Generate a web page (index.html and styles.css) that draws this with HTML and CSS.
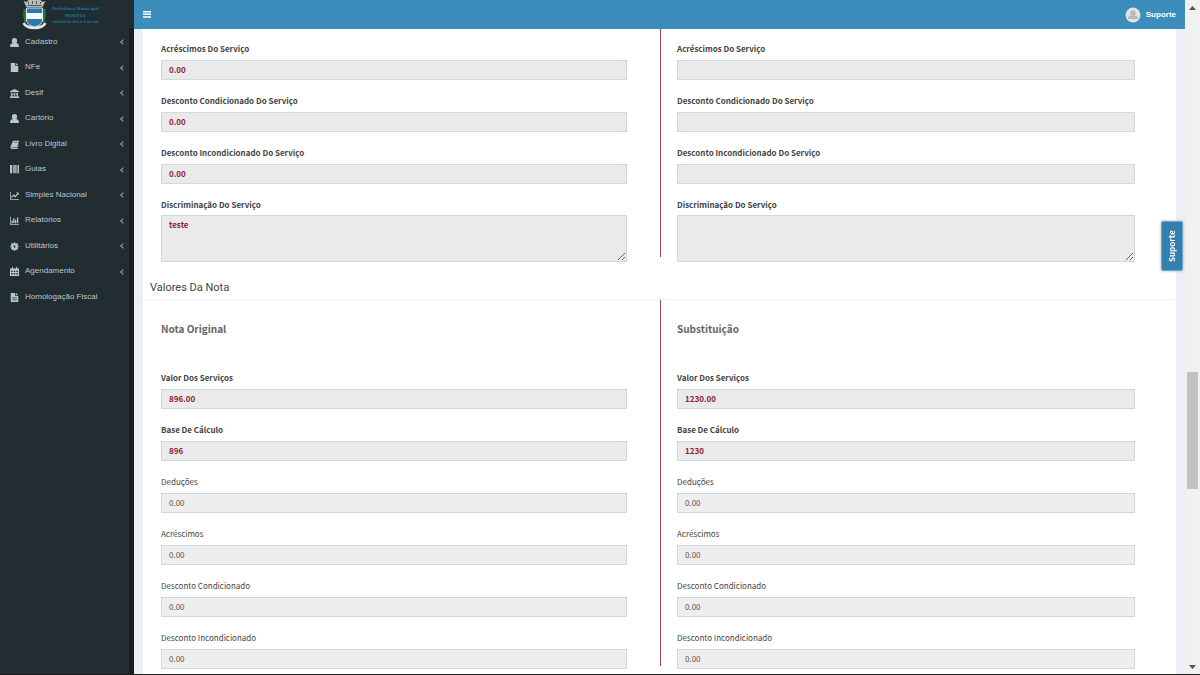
FILE: index.html
```html
<!DOCTYPE html>
<html lang="pt-BR">
<head>
<meta charset="utf-8">
<title>Nota Fiscal - Substituição</title>
<link rel="stylesheet" href="styles.css">
</head>
<body>
<div class="app">
  <aside class="sidebar">
    <a class="brand" href="#">
      <svg class="crest" viewBox="0 0 26 30" aria-hidden="true">
        <path fill="#237a3c" d="M2 9h3v13H3q-2-6-1-13zM21 9h3q1 7-1 13h-2z"/>
        <path fill="#b9bcb9" d="M2 1l3 1 2-2h12l2 2 3-1-3 6H5z"/>
        <path stroke="#4b5355" stroke-width="1" fill="none" d="M7 2v2M11 1v3M15 1v3M19 2v2M6 5.500h14"/>
        <path fill="#2a7ab0" stroke="#dfe5e8" d="M5 8h16v12q0 5-8 7-8-2-8-7z"/>
        <path fill="#f3f6f8" d="M5 13h16v6H5z"/>
        <path fill="none" stroke="#e2e5e4" stroke-width="2.500" d="M2 23q3 5 11 5t11-5"/>
      </svg>
      <span class="brand-text"><b>Prefeitura Municipal</b><b>MODELO</b><small>GESTÃO DE NFS-E E ISS ON</small></span>
    </a>
    <nav class="menu">
      <a href="#"><svg viewBox="0 0 12 12"><path d="M6 0c2.500 0 3.500 1.500 3.500 3.500 0 1.500-.7 2.500-1.300 3C11 7 12 9 12 12H0c0-3 1-5 3.800-5.500-.6-.5-1.300-1.500-1.300-3C2.500 1.500 3.500 0 6 0z"/></svg><span>Cadastro</span><i class="caret"></i></a>
      <a href="#"><svg viewBox="0 0 12 12"><path d="M1 0h6v4h4v8H1zM8 0l3 3H8z"/></svg><span>NFe</span><i class="caret"></i></a>
      <a href="#"><svg viewBox="0 0 12 12"><path d="M6 0l6 3v1H0V3zM1.300 5h2.200v4H1.300zM4.900 5h2.200v4H4.900zM8.500 5h2.200v4H8.500zM0 9.500h12V12H0z"/></svg><span>Desif</span><i class="caret"></i></a>
      <a href="#"><svg viewBox="0 0 12 12"><path d="M6 0c2.500 0 3.500 1.500 3.500 3.500 0 1.500-.7 2.500-1.300 3C11 7 12 9 12 12H0c0-3 1-5 3.800-5.500-.6-.5-1.300-1.500-1.300-3C2.500 1.500 3.500 0 6 0z"/></svg><span>Cartório</span><i class="caret"></i></a>
      <a href="#"><svg viewBox="0 0 12 12"><path fill-rule="evenodd" d="M4 1h8L9.500 10h-7q-1 .4 0 .8H10l2-6v1L10.200 12H2Q0 11 .7 9zM5.500 3l-.3.800h4.500l.3-.8z"/></svg><span>Livro Digital</span><i class="caret"></i></a>
      <a href="#"><svg viewBox="0 0 12 12"><path d="M0 0h3v11H0zM4 0h1v11H4zM5.700 0h2v11h-2zM8.300 0h.8v11h-.8zM10 0h2v11h-2z"/></svg><span>Guias</span><i class="caret"></i></a>
      <a href="#"><svg viewBox="0 0 12 12"><path d="M0 1h1v9.500h11v1H0z"/><path fill="none" stroke="currentColor" stroke-width="1.800" d="M2 8.500l3-3 2 2 3.500-4"/><path d="M8 2h3.500v3.500z"/></svg><span>Simples Nacional</span><i class="caret"></i></a>
      <a href="#"><svg viewBox="0 0 12 12"><path d="M0 1h1v9.500h11v1H0zM2 6h1.700v3.500H2zM4.300 3H6v6.500H4.300zM6.700 5h1.700v4.500H6.700zM9.300 2H11v7.500H9.300z"/></svg><span>Relatórios</span><i class="caret"></i></a>
      <a href="#"><svg viewBox="0 0 12 12"><circle cx="6" cy="6" r="3" fill="none" stroke="currentColor" stroke-width="3"/><path fill="none" stroke="currentColor" stroke-width="2" d="M6 .5v2M6 9.500v2M.5 6h2M9.500 6h2M2 2l1.500 1.500M8.500 8.500L10 10M10 2L8.500 3.500M3.500 8.500L2 10"/></svg><span>Utilitários</span><i class="caret"></i></a>
      <a href="#"><svg viewBox="0 0 12 12"><path fill-rule="evenodd" d="M0 2h2.500V0h1.500v2h4V0h1.500v2H12v10H0zM1.500 5v1.500h2V5zM5 5v1.500h2V5zM8.500 5v1.500h2V5zM1.500 8v2h2V8zM5 8v2h2V8zM8.500 8v2h2V8z"/></svg><span>Agendamento</span><i class="caret"></i></a>
      <a href="#"><svg viewBox="0 0 12 12"><path fill-rule="evenodd" d="M1 0h6v4h4v8H1zM8 0l3 3H8zM3 6v1h6V6zM3 8.500v1h6v-1z"/></svg><span>Homologação Fiscal</span></a>
    </nav>
  </aside>

  <div class="main">
    <header class="topbar">
      <button class="toggle" type="button" aria-label="Alternar menu"><svg viewBox="0 0 8 7"><path d="M0 0h8v1.500H0zM0 2.600h8v1.500H0zM0 5.200h8v1.500H0z"/></svg></button>
      <a class="user" href="#"><svg viewBox="0 0 16 16"><circle cx="8" cy="8" r="7.500" fill="#e1e1e1"/><circle cx="8" cy="6" r="2.700" fill="#b8b8b8"/><path fill="#b8b8b8" d="M3 12q0-3.500 3-3.500h4q3 0 3 3.500z"/></svg><span>Suporte</span></a>
    </header>

    <main class="box">
      <section class="compare compare-service">
        <div class="col col-left">
          <div class="field strong"><label for="a1">Acréscimos Do Serviço</label><input id="a1" value="0.00" readonly></div>
          <div class="field strong"><label for="a2">Desconto Condicionado Do Serviço</label><input id="a2" value="0.00" readonly></div>
          <div class="field strong"><label for="a3">Desconto Incondicionado Do Serviço</label><input id="a3" value="0.00" readonly></div>
          <div class="field strong"><label for="a4">Discriminação Do Serviço</label><textarea id="a4" readonly>teste</textarea></div>
        </div>
        <div class="divider"></div>
        <div class="col col-right">
          <div class="field strong"><label for="b1">Acréscimos Do Serviço</label><input id="b1" readonly></div>
          <div class="field strong"><label for="b2">Desconto Condicionado Do Serviço</label><input id="b2" readonly></div>
          <div class="field strong"><label for="b3">Desconto Incondicionado Do Serviço</label><input id="b3" readonly></div>
          <div class="field strong"><label for="b4">Discriminação Do Serviço</label><textarea id="b4" readonly></textarea></div>
        </div>
      </section>

      <h2 class="section-title">Valores Da Nota</h2>

      <section class="compare compare-values">
        <div class="col col-left">
          <h3>Nota Original</h3>
          <div class="field strong"><label for="c1">Valor Dos Serviços</label><input id="c1" value="896.00" readonly></div>
          <div class="field strong"><label for="c2">Base De Cálculo</label><input id="c2" value="896" readonly></div>
          <div class="field"><label for="c3">Deduções</label><input id="c3" value="0.00" readonly></div>
          <div class="field"><label for="c4">Acréscimos</label><input id="c4" value="0.00" readonly></div>
          <div class="field"><label for="c5">Desconto Condicionado</label><input id="c5" value="0.00" readonly></div>
          <div class="field"><label for="c6">Desconto Incondicionado</label><input id="c6" value="0.00" readonly></div>
        </div>
        <div class="divider"></div>
        <div class="col col-right">
          <h3>Substituição</h3>
          <div class="field strong"><label for="d1">Valor Dos Serviços</label><input id="d1" value="1230.00" readonly></div>
          <div class="field strong"><label for="d2">Base De Cálculo</label><input id="d2" value="1230" readonly></div>
          <div class="field"><label for="d3">Deduções</label><input id="d3" value="0.00" readonly></div>
          <div class="field"><label for="d4">Acréscimos</label><input id="d4" value="0.00" readonly></div>
          <div class="field"><label for="d5">Desconto Condicionado</label><input id="d5" value="0.00" readonly></div>
          <div class="field"><label for="d6">Desconto Incondicionado</label><input id="d6" value="0.00" readonly></div>
        </div>
      </section>
    </main>
  </div>

  <div class="scrollbar" aria-hidden="true">
    <svg viewBox="0 0 7 4"><path d="M0 4l3.500-4L7 4z"/></svg>
    <div class="track"><div class="thumb"></div></div>
    <svg viewBox="0 0 7 4"><path d="M0 0h7L3.500 4z"/></svg>
  </div>
</div>
<button class="support-tab" type="button">Suporte</button>
</body>
</html>
```
FILE: styles.css
```css
* { box-sizing: border-box; }

body {
  margin: 0;
  font-family: "Noto Sans CJK SC", "Noto Sans", sans-serif;
  font-size: 8px;
  color: #444;
}

a { color: inherit; text-decoration: none; }
button { border: 0; padding: 0; background: none; font: inherit; color: inherit; }

.app {
  display: flex;
  height: 100vh;
  overflow: hidden;
  border-bottom: 1px solid #1c1c1c;
}

.sidebar {
  flex: 0 0 134px;
  background: linear-gradient(to right, #222d32 129px, #161e21 129px);
  font-family: "Liberation Sans", Arial, sans-serif;
  font-size: 8px;
  color: #b8c7ce;
}

.brand {
  display: flex;
  gap: 4px;
  height: 28px;
  padding-left: 21px;
  background: #222d32;
}

.crest { width: 27px; height: 30px; flex: none; }

.brand-text {
  display: flex;
  flex-direction: column;
  align-items: center;
  padding-top: 5px;
  font-family: "DejaVu Serif", serif;
  font-size: 4px;
  line-height: 7px;
  color: #1677a8;
  white-space: nowrap;
}

.brand-text small { font-family: "DejaVu Sans", sans-serif; font-size: 3px; line-height: 6px; font-weight: bold; }

.menu a {
  display: flex;
  align-items: center;
  height: 25px;
  padding: 0 10px;
}

.menu a:nth-child(odd) { height: 26px; }
.menu svg { width: 9px; height: 9px; margin: 2px 6px 0 0; fill: currentColor; }
.menu span { flex: 1; white-space: nowrap; }

.caret {
  width: 4px;
  height: 4px;
  margin: 2px -1px 0 0;
  border: solid #94a2a8;
  border-width: 0 0 1px 1px;
  transform: rotate(45deg);
}

.main {
  flex: 1;
  min-width: 0;
  background: #ecf0f5;
}

.topbar {
  display: flex;
  align-items: center;
  justify-content: space-between;
  height: 29px;
  padding: 0 9px;
  background: #3c8dbc;
  color: #fff;
}

.toggle { display: flex; }
.toggle svg { width: 8px; height: 7px; fill: #fff; }

.user {
  display: flex;
  align-items: center;
  gap: 5px;
  font: bold 8px "Liberation Sans", Arial, sans-serif;
}

.user svg { width: 16px; height: 16px; }

.box {
  margin: 0 9px;
  height: 100%;
  background: #fff;
}

.compare {
  display: grid;
  grid-template-columns: 517fr 1px 515fr;
}

.compare-service { padding-top: 13px; }
.col-left { padding: 0 33px 0 18px; }
.col-right { padding: 0 41px 0 16px; }
.divider { background: #b04850; }
.compare-service .divider { margin: -13px 0 5px; }
.compare-values .divider { margin-bottom: 3px; }

.field {
  display: flex;
  flex-direction: column;
  margin-bottom: 14px;
}

.field:last-child { margin-bottom: 0; }
.field label { height: 18px; line-height: 14px; }
.strong label { font-weight: bold; }
.compare-service .field:last-child label { height: 17px; }

.field input,
.field textarea {
  width: 100%;
  height: 20px;
  margin: 0;
  padding: 0 7px 2px;
  border: 1px solid #d2d6de;
  border-radius: 0;
  outline: 0;
  background: #eee;
  font: inherit;
  color: #555;
}

.strong input, .strong textarea { background: #eaeaea; color: #8f1d2c; font-weight: bold; }
.field textarea { height: 47px; padding: 3px 7px; resize: vertical; }

.section-title {
  margin: 0;
  padding: 19px 7px 4px;
  border-bottom: 1px solid #f4f4f4;
  font: 11px/14px Roboto, "Liberation Sans", sans-serif;
  color: #444;
}

h3 {
  margin: 0;
  padding: 21px 0 34px;
  font-size: 10px;
  line-height: 16px;
  color: #666;
}

.scrollbar {
  flex: 0 0 15px;
  display: flex;
  flex-direction: column;
  align-items: center;
  padding: 6px 0 5px;
  background: #f1f1f1;
}

.scrollbar svg { width: 7px; height: 4px; fill: #505050; }
.track { flex: 1; padding-top: 362px; }
.thumb { width: 11px; height: 117px; background: #c1c1c1; }

.support-tab {
  position: fixed;
  top: 221px;
  right: 17px;
  width: 22px;
  height: 50px;
  border: 1px solid #6fa9ca;
  border-radius: 2px;
  background: #337fae;
  box-shadow: 0 0 3px #aaa;
  color: #fff;
  font-weight: bold;
  writing-mode: vertical-rl;
  transform: rotate(180deg);
}
```
